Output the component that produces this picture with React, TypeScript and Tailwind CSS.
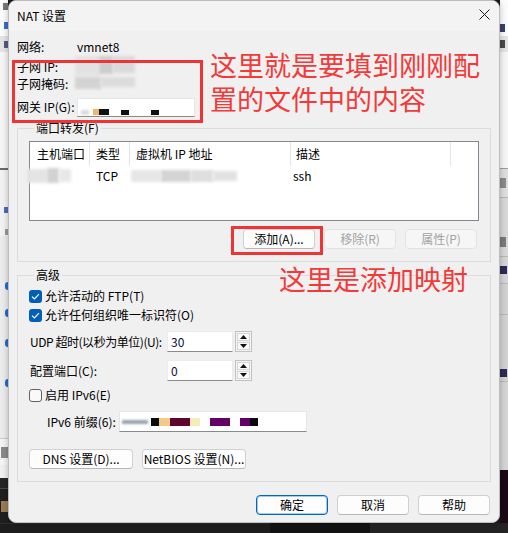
import React from "react";

const FONT = "font-['Noto_Sans_CJK_SC','Noto_Sans',sans-serif]";

type BtnProps = {
  label: string;
  disabled?: boolean;
  primary?: boolean;
  wide?: boolean;
};

const Btn: React.FC<BtnProps> = ({ label, disabled, primary, wide }) => {
  let tone = "border-[#d0d0d0] border-b-[#b8b8b8] bg-[#fdfdfd] text-black";
  if (disabled) tone = "border-[#e3e3e3] bg-[#f6f6f6] text-[#a3a3a3]";
  if (primary) tone = "border-[#0067c0] bg-[#fdfdfd] text-black shadow-[inset_0_0_0_1px_rgba(0,103,192,0.35)]";
  return (
    <div
      className={`${wide ? "w-[104px]" : "w-[72px]"} h-[20px] rounded-[4px] border ${tone} flex items-center justify-center text-[12px] leading-[16px] whitespace-nowrap`}
    >
      {label}
    </div>
  );
};

const Check: React.FC<{ checked?: boolean }> = ({ checked }) =>
  checked ? (
    <div className="w-[13px] h-[13px] rounded-[3px] bg-[#005fb8] flex items-center justify-center">
      <svg width="9" height="7" viewBox="0 0 9 7">
        <path d="M1 3.6 L3.4 6 L8 1.2" stroke="white" strokeWidth="1.2" fill="none" />
      </svg>
    </div>
  ) : (
    <div className="w-[13px] h-[13px] rounded-[3px] border border-[#616161] bg-[#f9f9f9]" />
  );

const Arrow: React.FC<{ up?: boolean }> = ({ up }) => (
  <svg width="7" height="4" viewBox="0 0 7 4">
    <path d={up ? "M0 4 L3.5 0 L7 4 Z" : "M0 0 L3.5 4 L7 0 Z"} fill="#111" />
  </svg>
);

const SpinField: React.FC<{ value: string }> = ({ value }) => (
  <div className="flex items-center gap-[2px]">
    <div className="w-[66px] h-[21px] bg-white border border-[#ececec] border-b-[#8a8a8a] pl-[3px] flex items-center text-[12px] text-[#0a0a3c]">
      {value}
    </div>
    <div className="w-[17px] h-[21px] border border-[#c2c2c2] bg-[#f3f3f3] flex flex-col p-[1px] gap-[1px]">
      <div className="flex-1 border border-[#d6d6d6] bg-[#f8f8f8] flex items-center justify-center">
        <Arrow up />
      </div>
      <div className="flex-1 border border-[#d6d6d6] bg-[#f8f8f8] flex items-center justify-center">
        <Arrow />
      </div>
    </div>
  </div>
);

const LeftStrip: React.FC = () => (
  <div className="w-[8px] h-[523px] flex flex-col">
    <div className="h-[14px] bg-[#fbfbfb] flex items-start">
      <div className="mt-[3px] ml-[3px] w-[5px] h-[7px] bg-[#777]" />
    </div>
    <div className="h-[22px] bg-[#fbfbfb] flex items-center">
      <div className="ml-[4px] w-[4px] h-[7px] bg-[#3a6cc6]" />
    </div>
    <div className="h-[16px] bg-[#e4e4e4] flex items-center">
      <div className="ml-[4px] w-[4px] h-[7px] bg-[#555a86]" />
    </div>
    <div className="h-[116px] bg-[#f6f6f6]" />
    <div className="h-[2px] bg-[#6b6b6b]" />
    <div className="h-[36px] bg-[#f2f2f2]" />
    <div className="h-[8px] bg-[#f2f2f2] flex items-center">
      <div className="ml-[4px] w-[4px] h-[6px] bg-[#4b6fb8]" />
    </div>
    <div className="h-[14px] bg-[#f2f2f2]" />
    <div className="h-[8px] bg-[#f2f2f2] flex items-center">
      <div className="ml-[5px] w-[3px] h-[6px] bg-[#9a9a9a]" />
    </div>
    <div className="h-[45px] bg-[#ececec]" />
    <div className="h-[10px] bg-[#ececec] flex items-center">
      <div className="ml-[5px] w-[3px] h-[8px] rounded-l-full bg-[#1f6fd1]" />
    </div>
    <div className="h-[17px] bg-[#ececec]" />
    <div className="h-[10px] bg-[#ececec] flex items-center">
      <div className="ml-[5px] w-[3px] h-[8px] rounded-l-full bg-[#1f6fd1]" />
    </div>
    <div className="h-[20px] bg-[#ececec]" />
    <div className="h-[10px] bg-[#ececec] flex items-center">
      <div className="ml-[5px] w-[3px] h-[8px] rounded-l-full bg-[#1f6fd1]" />
    </div>
    <div className="h-[30px] bg-[#ececec]" />
    <div className="h-[10px] bg-[#ececec] flex items-center">
      <div className="ml-[5px] w-[3px] h-[8px] rounded-l-full bg-[#1f6fd1]" />
    </div>
    <div className="h-[50px] bg-[#ececec]" />
    <div className="h-[1px] bg-[#c9c9c9]" />
    <div className="h-[26px] bg-[#f4f4f4] flex items-center">
      <div className="ml-[1px] w-[7px] h-[11px] bg-[#8a8a8a]" />
    </div>
    <div className="h-[13px] bg-[#efefef]" />
    <div className="h-[10px] bg-[#262626]" />
    <div className="h-[1px] bg-[#4a4a4a]" />
    <div className="flex-1 bg-[#1f1f1f] flex items-center">
      <div className="ml-[1px] w-[7px] h-[11px] bg-[#9c7b52]" />
    </div>
  </div>
);

const RightStrip: React.FC = () => (
  <div className="w-[8px] h-[523px] flex flex-col">
    <div className="h-[20px] bg-[#fbfbfb]" />
    <div className="h-[16px] bg-[#fbfbfb] flex items-center">
      <div className="w-[5px] h-[8px] bg-[#3b3f68]" />
    </div>
    <div className="h-[16px] bg-[#e4e4e4] flex items-center">
      <div className="w-[5px] h-[8px] bg-[#4a4a4a]" />
    </div>
    <div className="h-[116px] bg-[#f6f6f6]" />
    <div className="h-[1px] bg-[#9d9d9d]" />
    <div className="h-[28px] bg-[#dedede] flex items-center">
      <div className="w-[6px] h-[10px] bg-[#8a8a8a]" />
    </div>
    <div className="h-[1px] bg-[#b8b8b8]" />
    <div className="h-[30px] bg-[#d7d7d7]" />
    <div className="h-[28px] bg-[#d7d7d7] flex items-center">
      <div className="w-[6px] h-[10px] bg-[#7a7a7a]" />
    </div>
    <div className="h-[1px] bg-[#b8b8b8]" />
    <div className="h-[26px] bg-[#d5d5d5] flex items-center">
      <div className="w-[7px] h-[8px] bg-[#2b2b55]" />
    </div>
    <div className="h-[1px] bg-[#b8b8b8]" />
    <div className="h-[30px] bg-[#d2d2d2]" />
    <div className="h-[1px] bg-[#b8b8b8]" />
    <div className="h-[50px] bg-[#d2d2d2]" />
    <div className="h-[16px] bg-[#d2d2d2] flex items-center">
      <div className="w-[7px] h-[8px] bg-[#2b2b55]" />
    </div>
    <div className="h-[1px] bg-[#b8b8b8]" />
    <div className="h-[88px] bg-[#d4d4d4]" />
    <div className="flex-1 bg-[#190a16]" />
  </div>
);

const Blot: React.FC<{ tone: string; w: string; h: string }> = ({ tone, w, h }) => (
  <div className={`${w} ${h} ${tone} blur-[1.5px]`} />
);

const NatDialog: React.FC = () => (
  <div className="relative w-[492px] h-[523px] rounded-[8px] border border-[#bdbdbd] bg-[#f0f0f0] flex flex-col overflow-hidden shadow-[0_0_6px_rgba(0,0,0,0.25)]">
    {/* title bar */}
    <div className="h-[30px] bg-[#f3f3f3] flex items-center justify-between pl-[8px] pr-[9px] text-[12px] text-black">
      <span>NAT 设置</span>
      <svg width="11" height="11" viewBox="0 0 11 11" className="mb-[3px]">
        <path d="M0.5 0.5 L10.5 10.5 M10.5 0.5 L0.5 10.5" stroke="#1b1b1b" strokeWidth="1" />
      </svg>
    </div>

    {/* network info */}
    <div className="flex">
      <div className="w-[201px] pl-[8px] pt-[8px] text-[12px] leading-[16px] text-black flex flex-col">
        <div className="flex h-[16px]">
          <span className="w-[60px]">网络:</span>
          <span>vmnet8</span>
        </div>
        <div className="flex h-[16px] mt-[4px]">
          <span className="w-[58px]">子网 IP:</span>
          <div className="flex items-start gap-0 -mt-[3px]">
            <Blot tone="bg-[#e2e2e2]" w="w-[24px]" h="h-[20px]" />
            <Blot tone="bg-[#cdcdcd]" w="w-[14px]" h="h-[18px]" />
            <Blot tone="bg-[#dadada]" w="w-[22px]" h="h-[17px]" />
          </div>
        </div>
        <div className="flex h-[16px] mt-[1px]">
          <span className="w-[58px]">子网掩码:</span>
          <div className="flex items-start gap-0 mt-[1px]">
            <Blot tone="bg-[#d3d3d3]" w="w-[26px]" h="h-[12px]" />
            <Blot tone="bg-[#dcdcdc]" w="w-[34px]" h="h-[10px]" />
          </div>
        </div>
        <div className="flex items-center h-[20px] mt-[5px]">
          <span className="w-[60px]">网关 IP(G):</span>
          <div className="w-[118px] h-[19px] bg-white border border-[#e6e6e6] border-b-[#8a8a8a] flex items-end pb-[1px] pl-[3px]">
            <div className="w-[8px] h-[5px] bg-[#dcdcdc] blur-[1px]" />
            <div className="w-[6px] h-[6px] bg-[#f2b46a] ml-[4px]" />
            <div className="w-[10px] h-[6px] bg-[#111]" />
            <div className="w-[8px] h-[5px] bg-[#111] ml-[12px]" />
            <div className="w-[8px] h-[5px] bg-[#111] ml-[22px]" />
          </div>
        </div>
      </div>
      <div className="mt-[17px] text-[27px] leading-[34px] text-[#f23a3a]">
        <div>这里就是要填到刚刚配</div>
        <div>置的文件中的内容</div>
      </div>
    </div>

    {/* red box around network info */}
    <div className="absolute left-[3px] top-[59px] w-[191px] h-[63px] border-[3px] border-[#ee3434]" />

    {/* port forwarding */}
    <fieldset className="mx-[8px] mt-[3px] border border-[#dcdcdc] px-[11px] pb-[12px]">
      <legend className="ml-[5px] px-[2px] text-[12px] leading-[16px] text-black">端口转发(F)</legend>
      <div className="mt-[5px] h-[80px] bg-white border border-[#84878f] flex flex-col text-[12px] text-black">
        <div className="flex h-[24px] items-center">
          <div className="w-[60px] h-full pl-[7px] border-r border-[#e5e5e5] flex items-center">主机端口</div>
          <div className="w-[40px] h-full pl-[6px] border-r border-[#e5e5e5] flex items-center">类型</div>
          <div className="w-[161px] h-full pl-[6px] border-r border-[#e5e5e5] flex items-center">虚拟机 IP 地址</div>
          <div className="w-[160px] h-full pl-[5px] border-r border-[#e5e5e5] flex items-center">描述</div>
        </div>
        <div className="flex h-[19px] items-center">
          <div className="w-[60px] h-full flex items-center -ml-[3px]">
            <Blot tone="bg-[#e4e4e4]" w="w-[20px]" h="h-[14px]" />
            <Blot tone="bg-[#d2d2d2]" w="w-[12px]" h="h-[15px]" />
            <Blot tone="bg-[#e8e8e8]" w="w-[12px]" h="h-[13px]" />
          </div>
          <div className="w-[40px] pl-[9px]">TCP</div>
          <div className="w-[161px] h-full flex items-center pl-[4px]">
            <Blot tone="bg-[#e6e6e6]" w="w-[30px]" h="h-[12px]" />
            <Blot tone="bg-[#d4d4d4]" w="w-[30px]" h="h-[12px]" />
            <Blot tone="bg-[#dedede]" w="w-[22px]" h="h-[12px]" />
            <Blot tone="bg-[#e2e2e2]" w="w-[24px]" h="h-[10px]" />
          </div>
          <div className="w-[160px] pl-[5px]">ssh</div>
        </div>
      </div>
      <div className="mt-[8px] flex justify-end gap-[9px] pr-[2px]">
        <div className="relative">
          <Btn label="添加(A)..." />
          <div className="absolute -left-[12px] -top-[3px] w-[92px] h-[29px] border-[3px] border-[#ee3434]" />
        </div>
        <Btn label="移除(R)" disabled />
        <Btn label="属性(P)" disabled />
      </div>
    </fieldset>

    {/* advanced */}
    <fieldset className="mx-[8px] mt-[5px] border border-[#dcdcdc] pl-[11px] pb-[12px] text-[12px] leading-[16px] text-black">
      <legend className="ml-[5px] px-[2px]">高级</legend>
      <div className="mt-[5px] flex items-center gap-[3px] h-[16px]">
        <Check checked />
        <span>允许活动的 FTP(T)</span>
      </div>
      <div className="mt-[3px] flex items-center gap-[3px] h-[16px]">
        <Check checked />
        <span>允许任何组织唯一标识符(O)</span>
      </div>
      <div className="mt-[8px] flex items-center h-[21px]">
        <span className="w-[138px] shrink-0 pl-[1px] whitespace-nowrap tracking-[-0.45px]">UDP 超时(以秒为单位)(U):</span>
        <SpinField value="30" />
      </div>
      <div className="mt-[8px] flex items-center h-[21px]">
        <span className="w-[138px] shrink-0 pl-[1px] whitespace-nowrap">配置端口(C):</span>
        <SpinField value="0" />
      </div>
      <div className="mt-[6px] flex items-center gap-[3px] h-[16px]">
        <Check />
        <span>启用 IPv6(E)</span>
      </div>
      <div className="mt-[8px] flex items-center h-[21px]">
        <span className="w-[90px] shrink-0 pl-[18px] whitespace-nowrap">IPv6 前缀(6):</span>
        <div className="w-[188px] h-[21px] bg-white border border-[#e6e6e6] border-b-[#8a8a8a] flex items-center">
          <div className="ml-[2px] w-[26px] h-[4px] bg-[#9aa3b0] blur-[1px]" />
          <div className="ml-[3px] w-[8px] h-[8px] bg-[#0b0b0b]" />
          <div className="w-[11px] h-[8px] bg-[#f2cb86]" />
          <div className="w-[20px] h-[8px] bg-[#5e0530]" />
          <div className="w-[10px] h-[8px] bg-[#f4eeb6]" />
          <div className="ml-[10px] w-[20px] h-[8px] bg-[#640066]" />
          <div className="ml-[10px] w-[10px] h-[8px] bg-[#640066]" />
          <div className="w-[8px] h-[8px] bg-[#0b0b0b]" />
        </div>
      </div>
      <div className="mt-[17px] flex gap-[9px]">
        <Btn label="DNS 设置(D)..." wide />
        <Btn label="NetBIOS 设置(N)..." wide />
      </div>
    </fieldset>

    {/* red note for add mapping */}
    <div className="absolute left-[270px] top-[261px] text-[27px] leading-[34px] text-[#f23a3a]">
      这里是添加映射
    </div>

    {/* dialog buttons */}
    <div className="mt-[13px] flex justify-end gap-[9px] pr-[9px]">
      <Btn label="确定" primary />
      <Btn label="取消" />
      <Btn label="帮助" />
    </div>
  </div>
);

const App: React.FC = () => {
  return (
    <div className={`w-[508px] h-[533px] overflow-hidden flex flex-col bg-[#1b1b1b] ${FONT}`}>
      <div className="flex h-[523px]">
        <LeftStrip />
        <NatDialog />
        <RightStrip />
      </div>
      <div className="h-[10px] flex">
        <div className="w-[270px] bg-[#1d1d1d] border-t border-[#2e2e2e]" />
        <div className="w-[100px] bg-[#121212]" />
        <div className="flex-1 bg-[#232323]" />
      </div>
    </div>
  );
};

export default App;
